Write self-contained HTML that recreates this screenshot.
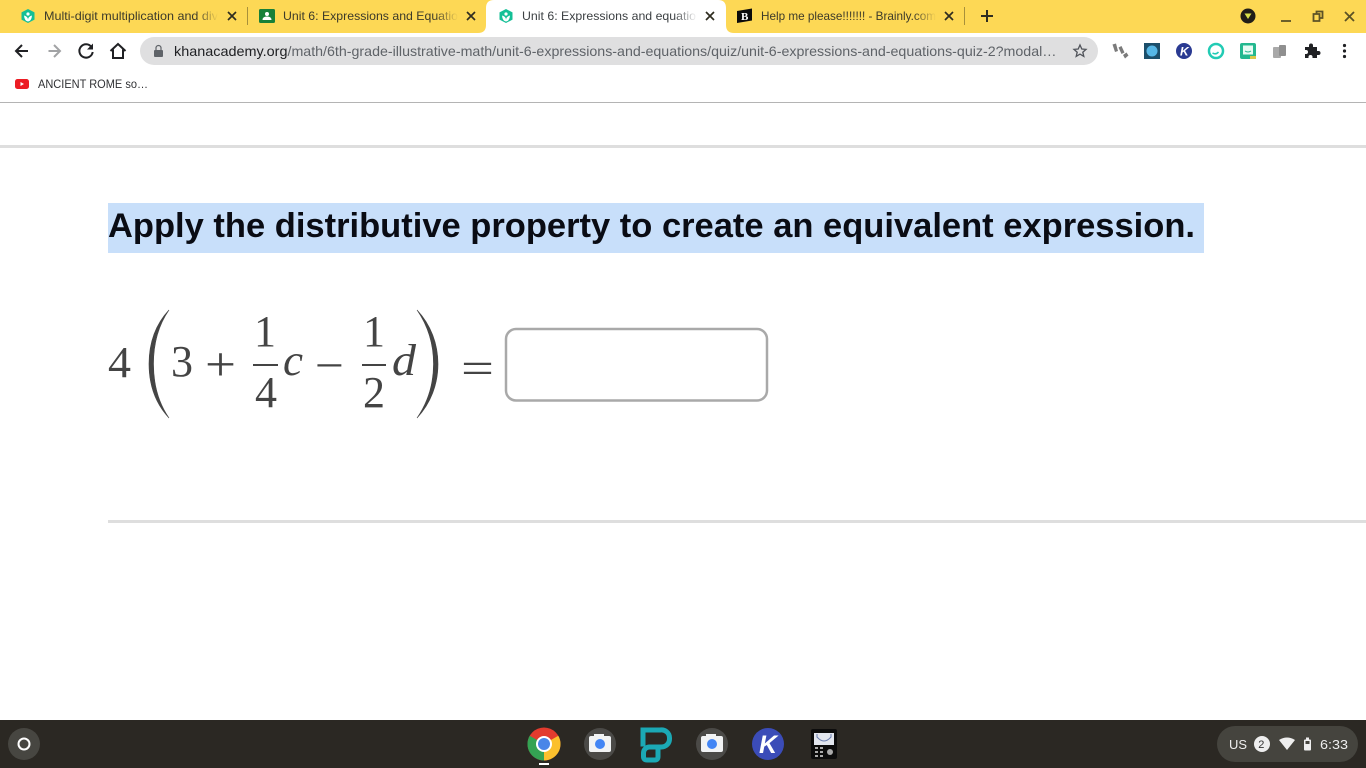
<!DOCTYPE html>
<html lang="en"><head><meta charset="utf-8"><title>Unit 6: Expressions and equations</title>
<style>
html,body{margin:0;padding:0;width:1366px;height:768px;overflow:hidden;background:#fff}
svg{display:block;position:absolute;left:0;top:0}
.ui{font-family:"Liberation Sans",sans-serif;font-size:12px;fill:#3c3a2a}
.m{font-family:"Liberation Serif",serif;font-size:44px;fill:#444}
</style></head><body>
<svg width="1366" height="768" viewBox="0 0 1366 768" xmlns="http://www.w3.org/2000/svg">
<defs>
<linearGradient id="fy" x1="0" x2="1" y1="0" y2="0"><stop offset="0" stop-color="#fdd855" stop-opacity="0"/><stop offset="1" stop-color="#fdd855"/></linearGradient>
<linearGradient id="fw" x1="0" x2="1" y1="0" y2="0"><stop offset="0" stop-color="#fff" stop-opacity="0"/><stop offset="1" stop-color="#fff"/></linearGradient>
</defs>
<rect width="1366" height="33" fill="#fdd855"/>
<rect y="33" width="1366" height="69" fill="#fff"/>
<rect y="102" width="1366" height="1" fill="#b4b4b4"/>
<!-- active tab -->
<path d="M478 33q8 0 8-8V8q0-8 8-8h224q8 0 8 8v17q0 8 8 8z" fill="#fff"/>
<!-- tab favicons -->
<path d="M28 9l6.5 3.4v7.2L28 23l-6.5-3.400v-7.200z" fill="#14bf96"/><circle cx="28" cy="14" r="1.600" fill="#fff"/><path d="M24 15.500q4 1 4 4.500q0-3.500 4-4.500q-.5 5.500-4 6q-3.500-.5-4-6z" fill="#fff"/>
<path d="M506 9l6.500 3.400v7.200L506 23l-6.500-3.400v-7.200z" fill="#14bf96"/><circle cx="506" cy="14" r="1.600" fill="#fff"/><path d="M502 15.500q4 1 4 4.500q0-3.500 4-4.500q-.5 5.500-4 6q-3.500-.5-4-6z" fill="#fff"/>
<rect x="259" y="9" width="16" height="14" rx="1.500" fill="#188038"/><circle cx="267" cy="14" r="2" fill="#fff"/><path d="M262.500 20q0-3.500 4.500-3.500t4.500 3.500z" fill="#fff"/>
<path d="M737 11l15-2.500V20.500L737 23z" fill="#0b0b0b"/><text x="741" y="20" font-family="Liberation Serif,serif" font-weight="700" font-size="11" fill="#fff">B</text>
<!-- tab titles -->
<text class="ui" x="44" y="20" textLength="174" lengthAdjust="spacingAndGlyphs">Multi-digit multiplication and div</text>
<rect x="196" y="6" width="22" height="20" fill="url(#fy)"/>
<text class="ui" x="283" y="20" textLength="175" lengthAdjust="spacingAndGlyphs">Unit 6: Expressions and Equatio</text>
<rect x="435" y="6" width="23" height="20" fill="url(#fy)"/>
<text class="ui" x="522" y="20" textLength="174" lengthAdjust="spacingAndGlyphs" style="fill:#3c4043">Unit 6: Expressions and equatio</text>
<rect x="674" y="6" width="23" height="20" fill="url(#fw)"/>
<text class="ui" x="761" y="20" textLength="175" lengthAdjust="spacingAndGlyphs">Help me please!!!!!!! - Brainly.com</text>
<rect x="914" y="6" width="22" height="20" fill="url(#fy)"/>
<!-- tab close, separators, new tab -->
<g stroke="#2f2d20" stroke-width="1.700" fill="none">
<path d="M228 12l8 8m0-8l-8 8M467 12l8 8m0-8l-8 8M706 12l8 8m0-8l-8 8M945 12l8 8m0-8l-8 8"/>
</g>
<path d="M247.500 7v18M964.500 7v18" stroke="#a8903a" stroke-width="1"/>
<path d="M987 10v12M981 16h12" stroke="#2f2d20" stroke-width="2"/>
<!-- window controls -->
<circle cx="1248" cy="16" r="7.500" fill="#211d18"/><path d="M1244.500 13.500h7L1248 19z" fill="#d9e04a"/>
<path d="M1281 21h10" stroke="#5c5226" stroke-width="1.800"/>
<path d="M1313.500 14h6v7h-6z" fill="none" stroke="#5c5226" stroke-width="1.800"/><path d="M1316.500 14v-2.500h6v6.500h-3" fill="none" stroke="#5c5226" stroke-width="1.800"/>
<path d="M1345 12l9 9m0-9l-9 9" stroke="#5c5226" stroke-width="1.800"/>
<!-- nav -->
<path d="M28 51H16.500M22 45l-6 6 6 6" fill="none" stroke="#202124" stroke-width="2"/>
<path d="M60 51H48.500M54 45l6 6-6 6" fill="none" stroke="#a2a3a5" stroke-width="2"/>
<path d="M91.500 47a6.700 6.700 0 1 0 1.200 5" fill="none" stroke="#202124" stroke-width="2"/><path d="M93 43.500v6h-6z" fill="#202124"/>
<path d="M110.500 51l7.500-7 7.500 7M113 49.500V58h10v-8.500" fill="none" stroke="#202124" stroke-width="2"/>
<!-- omnibox -->
<rect x="140" y="37" width="958" height="28" rx="14" fill="#dfdfe0"/>
<rect x="154" y="50" width="9" height="7" rx="1" fill="#5f6368"/><path d="M156 50v-2a2.500 2.500 0 0 1 5 0v2" fill="none" stroke="#5f6368" stroke-width="1.200"/>
<text x="174" y="56" font-family="Liberation Sans,sans-serif" font-size="14" fill="#202124" textLength="113.500" lengthAdjust="spacingAndGlyphs">khanacademy.org</text>
<text x="287.500" y="56" font-family="Liberation Sans,sans-serif" font-size="14" fill="#5f6368" textLength="769" lengthAdjust="spacingAndGlyphs">/math/6th-grade-illustrative-math/unit-6-expressions-and-equations/quiz/unit-6-expressions-and-equations-quiz-2?modal…</text>
<path d="M1080 45l1.800 4 4.200.400-3.200 2.800 1 4.200-3.800-2.300-3.800 2.300 1-4.200-3.200-2.800 4.200-.4z" fill="none" stroke="#50535a" stroke-width="1.300"/>
<!-- extensions -->
<g fill="#7b7b7b"><path d="M1112.500 44.500l3.500-1 2 7.500-3 1zM1118.500 47.500l3-1.500 3 6.500-3 1.500zM1123 55l3.500-2.500 2 3-3.500 3z"/></g>
<rect x="1144" y="43" width="16" height="16" fill="#1c4f6b"/><circle cx="1152" cy="51" r="5.500" fill="#56b7e6"/>
<circle cx="1184" cy="51" r="8" fill="#2a3a92"/><text x="1180" y="55.500" font-family="Liberation Sans,sans-serif" font-weight="700" font-style="italic" font-size="12" fill="#fff">K</text>
<circle cx="1216" cy="51" r="7" fill="none" stroke="#22cbb4" stroke-width="2.500"/><path d="M1212.500 53q3.500 2 6-1" fill="none" stroke="#22cbb4" stroke-width="1.500"/>
<rect x="1240" y="43" width="16" height="16" rx="2" fill="#23b88f"/><rect x="1243" y="45.500" width="10" height="9" fill="#e8fbf3"/><path d="M1245 51q3 2 6 0" stroke="#23b88f" fill="none"/><rect x="1250" y="56" width="6" height="3" fill="#d9c94a"/>
<g fill="#a9a9a9"><rect x="1273" y="47" width="8" height="11" rx="1"/><rect x="1279" y="45" width="7" height="11" rx="1" fill="#8f8f8f"/></g>
<path d="M1305 47h4v-1.500a2 2 0 0 1 4 0V47h4v4h1.500a2 2 0 0 1 0 4H1317v3h-4.500v-1a2 2 0 0 0-4 0v1H1305v-4h1a2 2 0 0 0 0-4h-1z" fill="#202124"/>
<g fill="#202124"><circle cx="1344.500" cy="45.500" r="1.600"/><circle cx="1344.500" cy="51" r="1.600"/><circle cx="1344.500" cy="56.500" r="1.600"/></g>
<!-- bookmark -->
<rect x="15" y="79" width="14" height="10" rx="2.500" fill="#ec1c24"/><path d="M20.500 82l3.500 2-3.500 2z" fill="#fff"/>
<text x="38" y="88" font-family="Liberation Sans,sans-serif" font-size="12" fill="#303134" textLength="110" lengthAdjust="spacingAndGlyphs">ANCIENT ROME so…</text>
<!-- page -->
<rect y="145" width="1366" height="3" fill="#dedede"/>
<rect x="108" y="203" width="1096" height="50" fill="#c8dffa"/>
<text x="108" y="237" font-family="Liberation Sans,sans-serif" font-weight="700" font-size="34" fill="#0a0c14" textLength="1087" lengthAdjust="spacingAndGlyphs">Apply the distributive property to create an equivalent expression.</text>
<!-- math -->
<text class="m" x="108" y="377" textLength="23" lengthAdjust="spacingAndGlyphs">4</text>
<path d="M169 310C155 325 149 344 149 364C149 384 155 403 169 418C158 402 153.500 384 153.500 364C153.500 344 158 326 169 310z" fill="#444" stroke="#444" stroke-width=".6"/>
<text class="m" x="171" y="376" textLength="22" lengthAdjust="spacingAndGlyphs">3</text>
<text class="m" x="205" y="380" style="font-size:48px" textLength="31" lengthAdjust="spacingAndGlyphs">+</text>
<text class="m" x="254" y="346" textLength="22" lengthAdjust="spacingAndGlyphs">1</text>
<rect x="253" y="364" width="25" height="2" fill="#444"/>
<text class="m" x="255" y="407" textLength="22" lengthAdjust="spacingAndGlyphs">4</text>
<text class="m" x="283" y="375" font-style="italic" textLength="20" lengthAdjust="spacingAndGlyphs">c</text>
<text class="m" x="315" y="380" textLength="29" lengthAdjust="spacingAndGlyphs">−</text>
<text class="m" x="363" y="346" textLength="22" lengthAdjust="spacingAndGlyphs">1</text>
<rect x="362" y="364" width="24" height="2" fill="#444"/>
<text class="m" x="363" y="407" textLength="22" lengthAdjust="spacingAndGlyphs">2</text>
<text class="m" x="392" y="375" font-style="italic" textLength="24" lengthAdjust="spacingAndGlyphs">d</text>
<path d="M417 310C431 325 438 344 438 364C438 384 431 403 417 418C428 402 433.500 384 433.500 364C433.500 344 428 326 417 310z" fill="#444" stroke="#444" stroke-width=".6"/>
<text class="m" x="461" y="383" textLength="33" lengthAdjust="spacingAndGlyphs">=</text>
<rect x="506" y="329" width="261" height="71.500" rx="10" fill="#fff" stroke="#a9a9a9" stroke-width="2.500"/>
<rect x="108" y="520" width="1258" height="3" fill="#dedede"/>
<!-- shelf -->
<rect y="720" width="1366" height="48" fill="#2b2823"/>
<circle cx="24" cy="744" r="16" fill="#474641"/><circle cx="24" cy="744" r="5.500" fill="none" stroke="#fff" stroke-width="2"/>
<!-- chrome -->
<circle cx="544" cy="744" r="16.500" fill="#e33b2e"/>
<path d="M544 744L558.300 735.700A16.500 16.500 0 0 1 544 760.500z" fill="#fbc02d"/>
<path d="M544 744L544 760.500A16.500 16.500 0 0 1 529.700 735.700z" fill="#34a353"/>
<circle cx="544" cy="744" r="8" fill="#fff"/><circle cx="544" cy="744" r="6" fill="#4a86e8"/>
<rect x="539" y="763" width="10" height="2" fill="#fff"/>
<!-- cameras -->
<circle cx="600" cy="744" r="16" fill="#4b4a47"/><rect x="589" y="736" width="22" height="16" rx="2" fill="#f1f3f4"/><rect x="594" y="734" width="10" height="3" fill="#f1f3f4"/><circle cx="600" cy="744" r="5" fill="#4285f4"/>
<circle cx="712" cy="744" r="16" fill="#4b4a47"/><rect x="701" y="736" width="22" height="16" rx="2" fill="#f1f3f4"/><rect x="706" y="734" width="10" height="3" fill="#f1f3f4"/><circle cx="712" cy="744" r="5" fill="#4285f4"/>
<!-- P logo -->
<path d="M643 746.500V730H660a8 8 0 0 1 9.500 8v1a8 8 0 0 1-8 8H650a6 6 0 0 0-6.500 6v3.500q0 3.500 3.500 3.500h8q3 0 3-3.500v-8.500" fill="none" stroke="#1ba9b5" stroke-width="5"/>
<!-- K -->
<circle cx="768" cy="744" r="16" fill="#3b4cb8"/><text x="759" y="753" font-family="Liberation Sans,sans-serif" font-weight="700" font-style="italic" font-size="25" fill="#fff">K</text>
<!-- calculator -->
<rect x="811" y="729" width="26" height="30" rx="2" fill="#0c0c0c"/><rect x="814" y="733" width="20" height="12" fill="#e2e6ee"/><path d="M817 734v3q7 8 14 0v-3" fill="none" stroke="#6b7fb0" stroke-width="1"/>
<g fill="#aaa"><rect x="815" y="747" width="3" height="2"/><rect x="820" y="747" width="3" height="2"/><rect x="815" y="751" width="3" height="2"/><rect x="820" y="751" width="3" height="2"/><rect x="815" y="755" width="3" height="2"/><rect x="820" y="755" width="3" height="2"/><circle cx="830" cy="752" r="3"/></g>
<!-- tray -->
<rect x="1217" y="726" width="141" height="36" rx="18" fill="#45443e"/>
<text x="1229" y="749" font-family="Liberation Sans,sans-serif" font-size="13" fill="#eeeeee" textLength="18" lengthAdjust="spacingAndGlyphs">US</text>
<circle cx="1262" cy="744" r="8" fill="#eeeeee"/><text x="1258.300" y="748" font-family="Liberation Sans,sans-serif" font-size="11" fill="#333">2</text>
<path d="M1279 740q8-5 16 0l-8 10z" fill="#eeeeee"/>
<rect x="1304" y="739.500" width="7" height="11" rx="1" fill="#eeeeee"/><rect x="1306" y="737.500" width="3" height="2" fill="#eeeeee"/>
<rect x="1305.500" y="741" width="4" height="3" fill="#45443e"/>
<text x="1320" y="749" font-family="Liberation Sans,sans-serif" font-size="13" fill="#eeeeee" textLength="28" lengthAdjust="spacingAndGlyphs">6:33</text>
</svg>
</body></html>
